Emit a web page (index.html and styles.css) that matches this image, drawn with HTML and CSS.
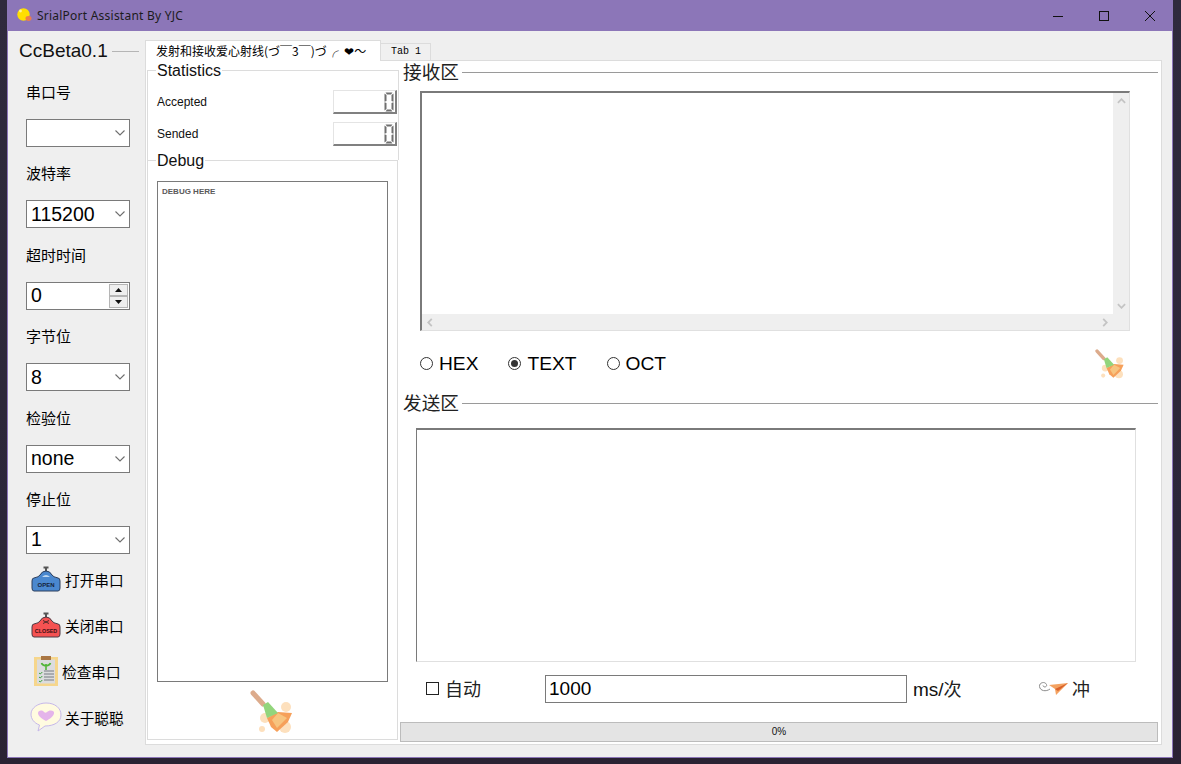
FILE: index.html
```html
<!DOCTYPE html>
<html lang="zh">
<head>
<meta charset="utf-8">
<title>SrialPort Assistant By YJC</title>
<link rel="stylesheet" href="styles.css">
</head>
<body>
<svg class="defs" width="0" height="0" aria-hidden="true">
  <defs>
    <symbol id="chev" viewBox="0 0 10 6"><path d="M0.5 0.5 L5 5 L9.5 0.5" fill="none" stroke="#6e6e6e" stroke-width="1.1"/></symbol>
    <symbol id="broom" viewBox="0 0 44 44">
      <path d="M3 3 L13 14" stroke="#dcab8c" stroke-width="5" stroke-linecap="round"/>
      <circle cx="36" cy="17" r="5" fill="#fde0bd"/>
      <circle cx="15" cy="28" r="5" fill="#fde0bd"/>
      <circle cx="12" cy="39" r="3" fill="#fde0bd"/>
      <circle cx="35" cy="37" r="6" fill="#fde0bd"/>
      <path d="M17 28 L28 22 L42 23 L38 32 L27 42 L21 37 Z" fill="#f6a05a"/>
      <path d="M22 30 L28 23 L37 28 L27 38 Z" fill="#f7c47f"/>
      <path d="M13 15 L18 12 L28 23 L17 28 Z" fill="#92d57c"/>
    </symbol>
    <symbol id="digit0" viewBox="0 0 10 20">
      <path d="M1.5 0.5H8.5L7 2.5H3Z M1.5 19.5H8.5L7 17.5H3Z M0.5 1.5L2.5 3V9L0.5 9.8Z M9.5 1.5L7.5 3V9L9.5 9.8Z M0.5 18.5L2.5 17V11L0.5 10.2Z M9.5 18.5L7.5 17V11L9.5 10.2Z" fill="#6f6f6f"/>
    </symbol>
  </defs>
</svg>

<main class="window">
  <header class="titlebar">
    <svg class="app-icon" viewBox="0 0 15 15"><circle cx="6.5" cy="6.5" r="6.2" fill="#ffdf00"/><ellipse cx="11.5" cy="10.5" rx="3" ry="2.4" fill="#ef7d4a"/><circle cx="3.5" cy="3" r="1.4" fill="#fff39a"/></svg>
    <span class="app-title">SrialPort Assistant By YJC</span>
    <div class="win-controls">
      <button class="win-btn"><svg viewBox="0 0 12 12" width="12" height="12"><path d="M1 6.5H11" stroke="#111" stroke-width="1"/></svg></button>
      <button class="win-btn"><svg viewBox="0 0 12 12" width="12" height="12"><rect x="1.5" y="1.5" width="9" height="9" fill="none" stroke="#111"/></svg></button>
      <button class="win-btn"><svg viewBox="0 0 12 12" width="12" height="12"><path d="M1 1L11 11M11 1L1 11" stroke="#111" stroke-width="1"/></svg></button>
    </div>
  </header>

  <div class="client">
    <aside class="sidebar">
      <div class="version"><span>CcBeta0.1</span><i class="rule"></i></div>
      <div class="fields">
        <div class="field"><label class="field-label">串口号</label><div class="combo"><span></span><svg class="chev"><use href="#chev"/></svg></div></div>
        <div class="field"><label class="field-label">波特率</label><div class="combo"><span>115200</span><svg class="chev"><use href="#chev"/></svg></div></div>
        <div class="field"><label class="field-label">超时时间</label>
          <div class="combo spin"><span>0</span>
            <div class="spin-btns">
              <b class="spin-btn"><svg viewBox="0 0 7 4" width="7" height="4"><path d="M3.5 0L7 4H0Z" fill="#111"/></svg></b>
              <b class="spin-btn"><svg viewBox="0 0 7 4" width="7" height="4"><path d="M3.5 4L7 0H0Z" fill="#111"/></svg></b>
            </div>
          </div>
        </div>
        <div class="field"><label class="field-label">字节位</label><div class="combo"><span>8</span><svg class="chev"><use href="#chev"/></svg></div></div>
        <div class="field"><label class="field-label">检验位</label><div class="combo"><span>none</span><svg class="chev"><use href="#chev"/></svg></div></div>
        <div class="field"><label class="field-label">停止位</label><div class="combo"><span>1</span><svg class="chev"><use href="#chev"/></svg></div></div>
      </div>
      <div class="actions">
        <div class="action">
          <svg class="act-icon" viewBox="0 0 30 26">
            <path d="M14 1H16V6H14Z M12.5 0.5H17.5V2.5H12.5Z" fill="#555"/>
            <path d="M3 12Q8 11 9 9Q11 5 15 5Q19 5 21 9Q22 11 27 12Q29 12 29 15V22Q29 25 27 25H3Q1 25 1 22V15Q1 12 3 12Z" fill="#4a88cf" stroke="#2c3e5c" stroke-width="1"/>
            <path d="M11 11Q15 7 19 11Z" fill="#bcd6f0"/>
            <text class="sign-text" x="15" y="20.5">OPEN</text>
          </svg>
          <span>打开串口</span>
        </div>
        <div class="action">
          <svg class="act-icon" viewBox="0 0 30 26">
            <path d="M14 1H16V6H14Z M12.5 0.5H17.5V2.5H12.5Z" fill="#555"/>
            <path d="M3 12Q8 11 9 9Q11 5 15 5Q19 5 21 9Q22 11 27 12Q29 12 29 15V22Q29 25 27 25H3Q1 25 1 22V15Q1 12 3 12Z" fill="#f55252" stroke="#4a3a44" stroke-width="1"/>
            <path d="M12 8.5L18 11.5M18 8.5L12 11.5" stroke="#4a2a2a" stroke-width="1"/>
            <text class="sign-text small" x="15" y="20.5">CLOSED</text>
          </svg>
          <span>关闭串口</span>
        </div>
        <div class="action check">
          <svg class="act-icon board" viewBox="0 0 24 30">
            <rect x="0" y="1" width="24" height="29" fill="#f6d68c"/>
            <rect x="3" y="3.5" width="18" height="24" fill="#dcdcde"/>
            <rect x="7" y="0" width="10" height="4" fill="#a97644"/>
            <path d="M12 14V8M12 10Q8 9 7.5 7M12 10Q16 9 16.5 7" stroke="#53b53a" stroke-width="1.6" fill="none"/>
            <path d="M10 15H20M10 18H20M10 21H20M10 24H20" stroke="#a9abb0" stroke-width="2"/>
            <path d="M5 17l1.3 1 2-2M5 21l1.3 1 2-2M5 25l1.3 1 2-2" stroke="#3aa33a" stroke-width="1" fill="none"/>
          </svg>
          <span>检查串口</span>
        </div>
        <div class="action talk">
          <svg class="act-icon bubble" viewBox="0 0 32 30">
            <path d="M16 1C25 1 31 6 31 13C31 20 24 24 15 24L8 29L9.5 23C4 21 1 17 1 12C1 6 8 1 16 1Z" fill="#fffbe0" stroke="#c6b8ea" stroke-width="1"/>
            <path d="M16 19C11 16 8 14 8 11C8 8.5 12 7.5 14 10C15 11 16 11 17 10C19 7.5 25 8 24 11.5C23.5 14 20 17 16 19Z" fill="#e4b4ea"/>
          </svg>
          <span>关于聪聪</span>
        </div>
      </div>
    </aside>

    <section class="tabs">
      <nav class="tabbar">
        <span class="tab active">发射和接收爱心射线(づ￣3￣)づ╭&nbsp; ❤～</span>
        <span class="tab other">Tab 1</span>
      </nav>
      <div class="pane">
        <div class="left-col">
          <fieldset class="group stats">
            <legend>Statistics</legend>
            <div class="stat-row">
              <span>Accepted</span>
              <div class="lcd"><svg class="digit"><use href="#digit0"/></svg></div>
            </div>
            <div class="stat-row">
              <span>Sended</span>
              <div class="lcd"><svg class="digit"><use href="#digit0"/></svg></div>
            </div>
          </fieldset>
          <fieldset class="group debug">
            <legend>Debug</legend>
            <div class="debug-box">DEBUG HERE</div>
            <div class="debug-foot"><svg class="broom-big"><use href="#broom"/></svg></div>
          </fieldset>
        </div>

        <div class="right-col">
          <div class="section-head"><span>接收区</span><i class="rule"></i></div>
          <div class="recv-box">
            <div class="recv-text"></div>
            <div class="vbar">
              <svg viewBox="0 0 10 6" width="9" height="6"><path d="M1 5L5 1L9 5" fill="none" stroke="#c4c4c4" stroke-width="2"/></svg>
              <svg viewBox="0 0 10 6" width="9" height="6"><path d="M1 1L5 5L9 1" fill="none" stroke="#c4c4c4" stroke-width="2"/></svg>
            </div>
            <div class="hbar">
              <svg viewBox="0 0 6 10" width="6" height="9"><path d="M5 1L1 5L5 9" fill="none" stroke="#c4c4c4" stroke-width="2"/></svg>
              <svg viewBox="0 0 6 10" width="6" height="9"><path d="M1 1L5 5L1 9" fill="none" stroke="#c4c4c4" stroke-width="2"/></svg>
            </div>
            <div class="corner"></div>
          </div>
          <div class="radio-row">
            <span class="radio-item hex"><i class="radio"></i>HEX</span>
            <span class="radio-item text"><i class="radio on"></i>TEXT</span>
            <span class="radio-item"><i class="radio"></i>OCT</span>
            <svg class="broom-small"><use href="#broom"/></svg>
          </div>
          <div class="section-head"><span>发送区</span><i class="rule"></i></div>
          <div class="send-box"></div>
          <div class="send-row">
            <span class="auto"><i class="checkbox"></i><span>自动</span></span>
            <div class="period">1000</div>
            <span class="unit"><span class="ms">ms/</span>次</span>
            <span class="fire">
              <svg class="plane" viewBox="0 0 30 16">
                <path d="M12 9C8 12 2 11 1.5 6.5C1 2.5 7 1 8.5 4.5C9.5 7 5.5 8 5 5.5" fill="none" stroke="#8b8b8b" stroke-width="1"/>
                <path d="M11 5L30 3L18 15L17 9Z" fill="#f4a261"/>
                <path d="M17 9L30 3L20 11Z" fill="#d9622b"/>
              </svg>
              <span>冲</span>
            </span>
          </div>
          <div class="progress">0%</div>
        </div>
      </div>
    </section>
  </div>
</main>
</body>
</html>
```

FILE: styles.css
```css
* { box-sizing: border-box; }
html, body { margin: 0; padding: 0; }
body {
  width: 1181px;
  height: 764px;
  overflow: hidden;
  background: linear-gradient(180deg, #2f2a3d 0%, #2c2639 70%, #2a2233 100%);
  font-family: "Liberation Sans", "Noto Sans CJK SC", sans-serif;
  color: #000;
}
.defs { position: absolute; }

.window {
  margin-left: 7px;
  width: 1166px;
  height: 758px;
  border: 1px solid #8c76b8;
  border-top: 0;
  background: #efefef;
  display: flex;
  flex-direction: column;
}

.titlebar {
  height: 31px;
  flex: none;
  background: #8c76b8;
  display: flex;
  align-items: center;
  padding-left: 10px;
  margin: 0 -1px 0 -1px;
}
.app-icon { width: 15px; height: 15px; margin-right: 5px; margin-top: -1px; }
.app-title {
  font-family: "Noto Sans", sans-serif;
  font-size: 12px;
  letter-spacing: 0.23px;
  color: #1c1c1c;
}
.win-controls { margin-left: auto; display: flex; }
.win-btn {
  width: 46px;
  height: 31px;
  padding: 0;
  border: 0;
  background: transparent;
  display: flex;
  align-items: center;
  justify-content: center;
}

.client { flex: 1; display: flex; min-height: 0; }

.sidebar {
  width: 137px;
  flex: none;
  display: flex;
  flex-direction: column;
}
.version {
  height: 20px;
  margin-top: 10px;
  padding-left: 11px;
  display: flex;
  align-items: center;
  gap: 4px;
  font-size: 19px;
  color: #111;
}
.rule { flex: 1; height: 1px; background: #9a9a9a; display: block; }
.version .rule { background: #b5b5b5; margin-right: 6px; }
.fields {
  margin-top: 18px;
  padding-left: 18px;
  display: grid;
  grid-auto-rows: 81.4px;
}
.field { display: flex; flex-direction: column; }
.field-label {
  height: 26px;
  line-height: 28px;
  font-size: 15px;
  margin-bottom: 14px;
}
.combo {
  width: 104px;
  height: 28px;
  border: 1px solid #7a7a7a;
  background: #fff;
  display: flex;
  align-items: center;
  padding-left: 4px;
  font-size: 19.5px;
}
.combo span { flex: 1; }
.chev { width: 10px; height: 6px; margin-right: 4px; }
.spin { padding-right: 1px; }
.spin-btns {
  width: 19px;
  height: 24px;
  display: flex;
  flex-direction: column;
}
.spin-btn {
  flex: 1;
  background: #efefef;
  border: 1px solid #b5b5b5;
  display: flex;
  align-items: center;
  justify-content: center;
}
.actions {
  display: flex;
  flex-direction: column;
  margin-top: -11px;
  padding-left: 23px;
}
.action {
  height: 46px;
  display: flex;
  align-items: center;
  gap: 4px;
  font-size: 14.67px;
}
.act-icon { width: 30px; height: 26px; flex: none; }
.action.check { gap: 4px; padding-left: 3px; }
.act-icon.board { width: 24px; height: 30px; }
.action.talk { margin-left: -1px; }
.act-icon.bubble { width: 32px; height: 30px; margin-right: -1px; }
.sign-text { font: bold 6px "Liberation Sans", sans-serif; text-anchor: middle; fill: #15233a; }
.sign-text.small { font-size: 5.4px; fill: #3a0f12; }

.tabs {
  flex: 1;
  padding: 9px 0 12px 0;
  margin-right: 10px;
  display: flex;
  flex-direction: column;
  min-width: 0;
}
.tabbar { display: flex; align-items: flex-end; height: 20px; flex: none; position: relative; z-index: 1; }
.tab { display: block; border: 1px solid #dcdcdc; }
.tab.active {
  width: 236px;
  height: 21px;
  margin-bottom: -1px;
  background: #fff;
  border-bottom: 0;
  font-family: "Noto Sans CJK SC", sans-serif;
  font-size: 12px;
  line-height: 19px;
  padding-left: 10px;
  white-space: nowrap;
  overflow: hidden;
}
.tab.other {
  width: 51px;
  height: 17px;
  margin-left: -1px;
  background: #f0f0f0;
  border-bottom: 0;
  font-family: "Liberation Mono", monospace;
  font-size: 10px;
  line-height: 16px;
  padding-left: 10px;
}
.pane {
  flex: 1;
  min-height: 0;
  background: #fff;
  border: 1px solid #dcdcdc;
  display: flex;
}

.left-col {
  width: 254px;
  flex: none;
  padding: 0 0 4px 1px;
  display: flex;
  flex-direction: column;
}
.group {
  margin: 0;
  padding: 0;
  border: 1px solid #dcdcdc;
  min-width: 0;
}
.group legend {
  margin-left: 8px;
  padding: 0 1px;
  font-size: 16px;
  line-height: 22px;
  height: 20px;
  color: #111;
}
.stats { height: 100px; flex: none; margin: -1px 1px -10px 0; border-bottom: 0; padding-top: 6px; }
.stat-row {
  height: 32px;
  padding-left: 9px;
  display: flex;
  align-items: center;
  justify-content: space-between;
  font-size: 12px;
  color: #111;
}
.lcd {
  width: 64px;
  height: 24px;
  margin-right: 1px;
  border: 1px solid #e4e4e4;
  border-bottom: 2px solid #808080;
  border-right: 2px solid #808080;
  display: flex;
  justify-content: flex-end;
  align-items: center;
  padding-right: 1px;
}
.digit { width: 10px; height: 20px; }
.debug {
  flex: 1;
  min-height: 0;
  margin-right: 2px;
  display: flex;
  flex-direction: column;
}
.debug-box {
  width: 231px;
  height: 501px;
  margin: 11px 0 0 9px;
  border: 1px solid #7a7a7a;
  padding: 5px 4px;
  font-size: 8px;
  line-height: 10px;
  font-weight: bold;
  color: #5a5a5a;
}
.debug-foot { display: flex; justify-content: flex-start; padding: 8px 0 0 102px; }
.broom-big { width: 44px; height: 44px; }

.right-col {
  flex: 1;
  min-width: 0;
  padding: 1px 3px 0 0;
  display: flex;
  flex-direction: column;
}
.section-head {
  height: 20px;
  padding-left: 3px;
  display: flex;
  align-items: center;
  gap: 3px;
  font-size: 18.67px;
  color: #222;
  flex: none;
}
.section-head span { margin-top: -4px; }
.recv-box {
  width: 710px;
  height: 240px;
  margin: 9px 0 0 20px;
  border-top: 2px solid #7a7a7a;
  border-left: 2px solid #7a7a7a;
  border-right: 1px solid #e0e0e0;
  border-bottom: 1px solid #e0e0e0;
  display: grid;
  grid-template-columns: 1fr 16px;
  grid-template-rows: 1fr 16px;
  flex: none;
}
.vbar {
  background: #efefef;
  display: flex;
  flex-direction: column;
  justify-content: space-between;
  align-items: center;
  padding: 5px 0;
}
.hbar {
  background: #efefef;
  display: flex;
  justify-content: space-between;
  align-items: center;
  padding: 0 5px;
}
.corner { background: #efefef; }
.radio-row {
  height: 62px;
  flex: none;
  padding: 3px 33px 0 20px;
  display: flex;
  align-items: center;
  font-size: 19.2px;
}
.radio-item { display: flex; align-items: center; gap: 6px; }
.radio-item.hex { margin-right: 30px; }
.radio-item.text { margin-right: 30px; }
.radio {
  width: 13px;
  height: 13px;
  border: 1px solid #333;
  border-radius: 50%;
  background: #fff;
  display: flex;
  align-items: center;
  justify-content: center;
}
.radio.on::after {
  content: "";
  width: 7px;
  height: 7px;
  border-radius: 50%;
  background: #333;
}
.broom-small { width: 30px; height: 30px; margin-left: auto; }
.send-box {
  width: 720px;
  height: 234px;
  margin: 15px 0 0 16px;
  flex: none;
  border-top: 2px solid #7a7a7a;
  border-left: 1px solid #7a7a7a;
  border-right: 1px solid #e0e0e0;
  border-bottom: 1px solid #e0e0e0;
}
.send-row {
  height: 54px;
  flex: none;
  padding-left: 26px;
  display: flex;
  align-items: center;
  font-size: 18px;
  color: #222;
}
.send-row > span { margin-top: -2px; }
.auto { display: flex; align-items: center; gap: 6px; width: 119px; }
.checkbox { width: 13px; height: 13px; border: 1px solid #222; display: block; }
.period {
  width: 362px;
  height: 28px;
  border: 1px solid #7a7a7a;
  padding-left: 3px;
  font-size: 19px;
  line-height: 26px;
  color: #000;
}
.unit { margin-left: 6px; width: 125px; white-space: nowrap; }
.ms { font-size: 19px; color: #111; }
.fire { display: flex; align-items: center; gap: 4px; }
.plane { width: 30px; height: 16px; }
.progress {
  height: 20px;
  margin-top: 6px;
  flex: none;
  background: #e4e4e4;
  border: 1px solid #bcbcbc;
  text-align: center;
  font-size: 10px;
  line-height: 18px;
  color: #111;
}
```
